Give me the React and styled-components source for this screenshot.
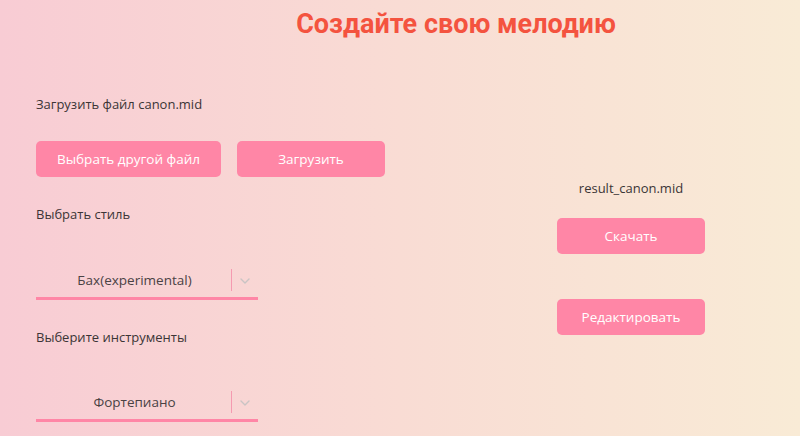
import React from 'react';
import styled, { createGlobalStyle } from 'styled-components';

const GlobalStyle = createGlobalStyle`
    html, body {
        margin: 0;
        padding: 0;
    }
    body {
        font-family: "Open Sans", "Noto Sans", sans-serif;
        color: #3b3536;
    }
`;

const Chevron = () => (
    <svg width="10" height="6" viewBox="0 0 10 6" fill="none">
        <path d="M1 1l4 4 4-4" stroke="#c9c4c4" strokeWidth="1.4" strokeLinecap="round" strokeLinejoin="round" />
    </svg>
);

const Select = ({ value }) => (
    <SelectBox>
        <SelectValue>{value}</SelectValue>
        <Separator />
        <Indicator>
            <Chevron />
        </Indicator>
    </SelectBox>
);

export default () => (
    <Page>
        <GlobalStyle />
        <Title>Создайте свою мелодию</Title>
        <Main>
            <LeftColumn>
                <Label>Загрузить файл canon.mid</Label>
                <ButtonRow>
                    <Button width={185}>Выбрать другой файл</Button>
                    <Button width={148}>Загрузить</Button>
                </ButtonRow>
                <Label top={29}>Выбрать стиль</Label>
                <SelectWrap top={41}>
                    <Select value="Бах(experimental)" />
                </SelectWrap>
                <Label top={29}>Выберите инструменты</Label>
                <SelectWrap top={40}>
                    <Select value="Фортепиано" />
                </SelectWrap>
            </LeftColumn>
            <RightColumn>
                <FileName>result_canon.mid</FileName>
                <Button width={148} top={22}>Скачать</Button>
                <Button width={148} top={45}>Редактировать</Button>
            </RightColumn>
        </Main>
    </Page>
);

const Page = styled.div`
    width: 800px;
    height: 436px;
    overflow: hidden;
    background: linear-gradient(90deg, #f8ccd4 0%, #f9dcd4 50%, #f9ebd6 100%);
`;

const Title = styled.h1`
    margin: 0;
    padding: 7px 0 0 112px;
    font-family: Roboto, "Liberation Sans", sans-serif;
    font-weight: 700;
    font-size: 27px;
    line-height: 34px;
    color: #f4533f;
    text-align: center;
`;

const Main = styled.div`
    display: flex;
`;

const LeftColumn = styled.div`
    display: flex;
    flex-direction: column;
    align-items: flex-start;
    width: 360px;
    padding: 55px 0 0 36px;
`;

const RightColumn = styled.div`
    display: flex;
    flex-direction: column;
    align-items: center;
    margin-left: 161px;
    width: 148px;
    padding-top: 139px;
`;

const Label = styled.div`
    margin-top: ${(p) => p.top || 0}px;
    font-size: 13px;
    line-height: 16px;
`;

const FileName = styled(Label)`
    color: #3b3536;
`;

const ButtonRow = styled.div`
    display: flex;
    gap: 16px;
    margin-top: 29px;
`;

const Button = styled.button`
    width: ${(p) => p.width}px;
    height: 36px;
    margin-top: ${(p) => p.top || 0}px;
    border: none;
    border-radius: 5px;
    background: #ff86a6;
    color: #fff;
    font-family: "Open Sans", "Noto Sans", sans-serif;
    font-size: 13.5px;
    cursor: pointer;
`;

const SelectWrap = styled.div`
    margin-top: ${(p) => p.top}px;
`;

const SelectBox = styled.div`
    display: flex;
    align-items: center;
    width: 222px;
    height: 34px;
    border-bottom: 3px solid #ff86a6;
`;

const SelectValue = styled.div`
    flex: 1;
    text-align: center;
    font-size: 13.5px;
    color: #4a4244;
    padding-left: 2px;
`;

const Separator = styled.div`
    width: 1px;
    height: 22px;
    background: #f59ab0;
`;

const Indicator = styled.div`
    display: flex;
    align-items: center;
    justify-content: center;
    width: 26px;
    padding-top: 2px;
`;
